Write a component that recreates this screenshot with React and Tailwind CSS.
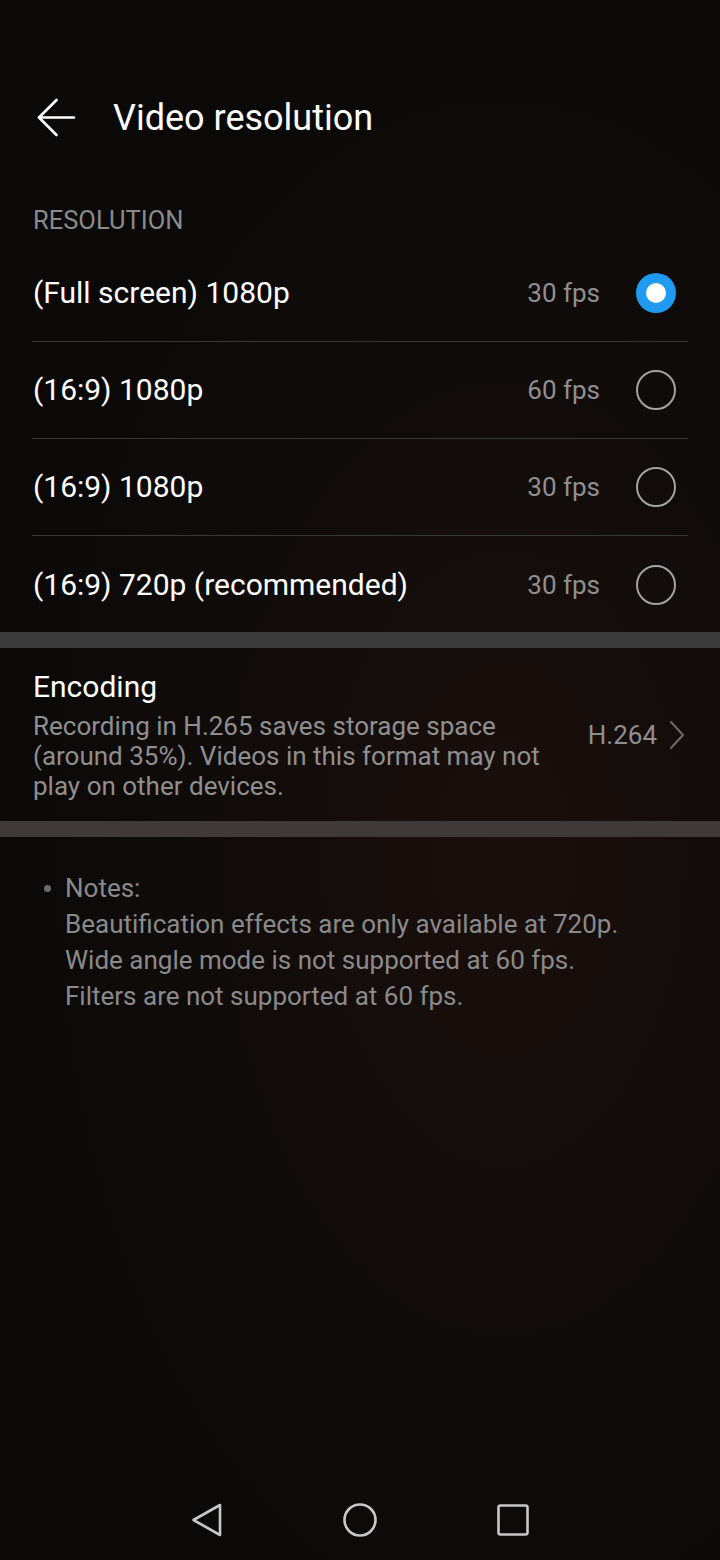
import React from "react";

const rows = [
  { label: "(Full screen) 1080p", fps: "30 fps", selected: true },
  { label: "(16:9) 1080p", fps: "60 fps" },
  { label: "(16:9) 1080p", fps: "30 fps" },
  { label: "(16:9) 720p (recommended)", fps: "30 fps" },
];

function Radio({ selected }) {
  if (selected) {
    return (
      <div className="w-[40px] h-[40px] rounded-full bg-[#1e9bf0] flex items-center justify-center">
        <div className="w-[20px] h-[20px] rounded-full bg-white" />
      </div>
    );
  }
  return <div className="w-[40px] h-[40px] rounded-full border-2 border-[#a3a3a3]" />;
}

export default function App() {
  return (
    <div
      className="w-[720px] h-[1560px] flex flex-col bg-[#0a0908] bg-[radial-gradient(ellipse_at_70%_55%,#1a0f0c_0%,#110c0a_35%,#0a0908_75%)] text-white overflow-hidden"
      style={{ fontFamily: "Roboto, 'Noto Sans', sans-serif" }}
    >
      {/* Header */}
      <div className="mt-[86px] h-[64px] flex items-center">
        <svg className="ml-[36px] w-[40px] h-[40px]" viewBox="0 0 40 40" fill="none" stroke="#ffffff" strokeWidth="2.6" strokeLinecap="round" strokeLinejoin="round">
          <path d="M3 19.5 H38" />
          <path d="M20.5 2 L3 19.5 L20.5 37" />
        </svg>
        <div className="ml-[37px] text-[36px] leading-[40px] text-white">Video resolution</div>
      </div>

      {/* Section header */}
      <div className="mt-[54px] px-[33px] h-[41px] text-[25.5px] leading-[32px] text-[#8a8a8a]">RESOLUTION</div>

      {/* Rows */}
      <div className="px-[32px]">
        {rows.map((r, i) => (
          <div
            key={i}
            className={`h-[97px] flex items-center ${i < rows.length - 1 ? "border-b border-[#383838]" : ""}`}
          >
            <div className="flex-1 text-[30px] leading-[36px] text-white pl-[1px]">{r.label}</div>
            <div className="text-[26px] leading-[32px] text-[#8f8f8f] mr-[36px]">{r.fps}</div>
            <div className="mr-[12px]">
              <Radio selected={r.selected} />
            </div>
          </div>
        ))}
      </div>

      <div className="h-[16px] bg-[#3b3a3a] -mt-[1px]" />

      {/* Encoding */}
      <div className="h-[173px] px-[33px] flex items-center">
        <div className="w-[545px]">
          <div className="text-[30px] leading-[36px] text-white">Encoding</div>
          <div className="mt-[6px] text-[26px] leading-[30px] text-[#8f8f8f]">
            Recording in H.265 saves storage space (around 35%). Videos in this format may not play on other devices.
          </div>
        </div>
        <div className="flex-1 flex items-center justify-end">
          <span className="text-[26px] leading-[32px] text-[#8f8f8f]">H.264</span>
          <svg className="ml-[11px] mr-[1px] w-[18px] h-[30px]" viewBox="0 0 18 30" fill="none" stroke="#6a6a6a" strokeWidth="2" strokeLinecap="round" strokeLinejoin="round">
            <path d="M3 2 L15 15 L3 28" />
          </svg>
        </div>
      </div>

      <div className="h-[16px] bg-[#3f3937]" />

      {/* Notes */}
      <div className="pt-[33px] pl-[44px] flex text-[26px] leading-[36px] text-[#8a8a8a]">
        <div className="w-[21px] flex justify-start pt-[15px]">
          <div className="w-[7px] h-[7px] rounded-full bg-[#6a6a6a]" />
        </div>
        <div>
          <div>Notes:</div>
          <div>Beautification effects are only available at 720p.</div>
          <div>Wide angle mode is not supported at 60 fps.</div>
          <div>Filters are not supported at 60 fps.</div>
        </div>
      </div>

      <div className="flex-1" />

      {/* Nav bar */}
      <div className="h-[80px] flex items-center justify-center gap-[113px]">
        <svg className="w-[40px] h-[40px]" viewBox="0 0 40 40" fill="none" stroke="#c8c8c8" strokeWidth="2.6" strokeLinejoin="round">
          <path d="M33 5 L33 35 L6.5 20 Z" />
        </svg>
        <svg className="w-[40px] h-[40px]" viewBox="0 0 40 40" fill="none" stroke="#c8c8c8" strokeWidth="2.6">
          <circle cx="20" cy="20" r="15.5" />
        </svg>
        <svg className="w-[40px] h-[40px]" viewBox="0 0 40 40" fill="none" stroke="#c8c8c8" strokeWidth="2.6">
          <rect x="5.5" y="5.5" width="29" height="29" rx="2" />
        </svg>
      </div>
    </div>
  );
}
